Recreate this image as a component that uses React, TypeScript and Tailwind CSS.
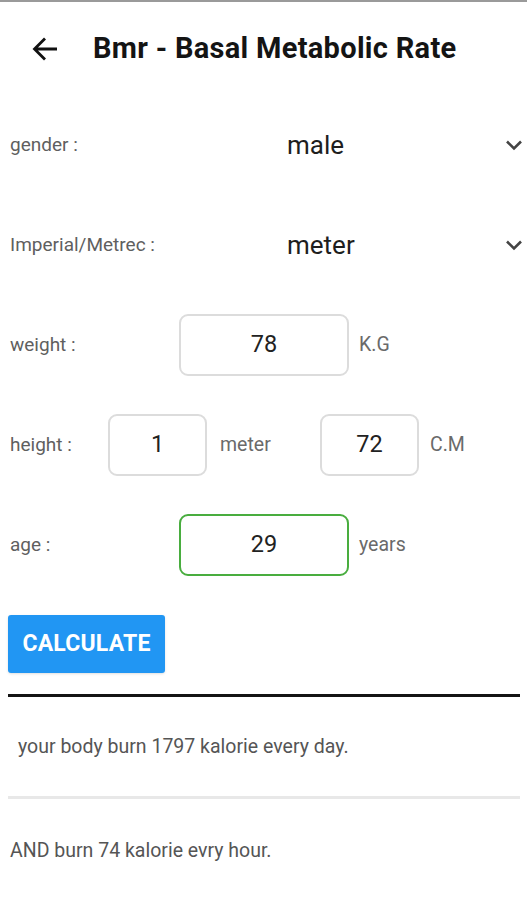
const FONT = { fontFamily: "Roboto, 'Noto Sans', Arial, sans-serif" };

function Chevron() {
  return (
    <svg width="18" height="12" viewBox="0 0 18 12" className="mr-[4px]">
      <path d="M2 2.5l7 7 7-7" fill="none" stroke="#444" strokeWidth="2.6" />
    </svg>
  );
}

function Box({ value, width, green }: { value: string; width: string; green?: boolean }) {
  return (
    <div
      className={`${width} flex h-[62px] items-center justify-center rounded-[9px] border-2 text-[23.5px] text-[#222] ${
        green ? "border-[#49ad3f]" : "border-[#dcdcdc]"
      }`}
    >
      {value}
    </div>
  );
}

export default function App() {
  return (
    <div className="min-h-[900px] w-[527px] overflow-hidden border-t-2 border-[#9a9a9a] bg-white" style={FONT}>
      <header className="flex h-[93px] items-center">
        <svg width="28" height="26" viewBox="0 0 28 26" className="ml-[31px]">
          <path d="M26 13H4 M14 2.5L3.5 13 14 23.5" fill="none" stroke="#111" strokeWidth="2.8" />
        </svg>
        <h1 className="ml-[34px] text-[29px] font-bold tracking-[0.3px] text-[#141414]">
          Bmr - Basal Metabolic Rate
        </h1>
      </header>

      <div className="flex h-[100px] items-center pl-[10px]">
        <span className="w-[277px] text-[19px] text-[#5f5f5f]">gender :</span>
        <span className="flex-1 text-[26px] text-[#1e1e1e]">male</span>
        <Chevron />
      </div>

      <div className="flex h-[100px] items-center pl-[10px]">
        <span className="w-[277px] text-[19px] text-[#5f5f5f]">Imperial/Metrec :</span>
        <span className="flex-1 text-[26px] text-[#1e1e1e]">meter</span>
        <Chevron />
      </div>

      <div className="flex h-[100px] items-center pl-[10px]">
        <span className="w-[169px] text-[19px] text-[#5f5f5f]">weight :</span>
        <Box value="78" width="w-[170px]" />
        <span className="ml-[10px] text-[19.5px] text-[#6a6a6a]">K.G</span>
      </div>

      <div className="flex h-[100px] items-center pl-[10px]">
        <span className="w-[98px] text-[19px] text-[#5f5f5f]">height :</span>
        <Box value="1" width="w-[99px]" />
        <span className="w-[113px] pl-[13px] text-[19.5px] text-[#6a6a6a]">meter</span>
        <Box value="72" width="w-[99px]" />
        <span className="ml-[11px] text-[19.5px] text-[#6a6a6a]">C.M</span>
      </div>

      <div className="flex h-[100px] items-center pl-[10px]">
        <span className="w-[169px] text-[19px] text-[#5f5f5f]">age :</span>
        <Box value="29" width="w-[170px]" green />
        <span className="ml-[10px] text-[19.5px] text-[#6a6a6a]">years</span>
      </div>

      <button className="ml-[8px] mt-[20px] flex h-[58px] w-[157px] items-center justify-center rounded-[3px] bg-[#2196f3] text-[23px] font-bold tracking-[0.2px] text-white shadow-sm">
        CALCULATE
      </button>

      <div className="ml-[8px] mt-[21px] h-[3px] w-[512px] bg-[#141414]" />

      <div className="flex h-[99px] items-center pl-[18px] text-[19.5px] text-[#555]">
        your body burn 1797 kalorie every day.
      </div>

      <div className="ml-[8px] h-[3px] w-[512px] bg-[#e8e8e8]" />

      <div className="flex h-[104px] items-center pl-[10px] text-[19.5px] text-[#555]">
        AND burn 74 kalorie evry hour.
      </div>
    </div>
  );
}
